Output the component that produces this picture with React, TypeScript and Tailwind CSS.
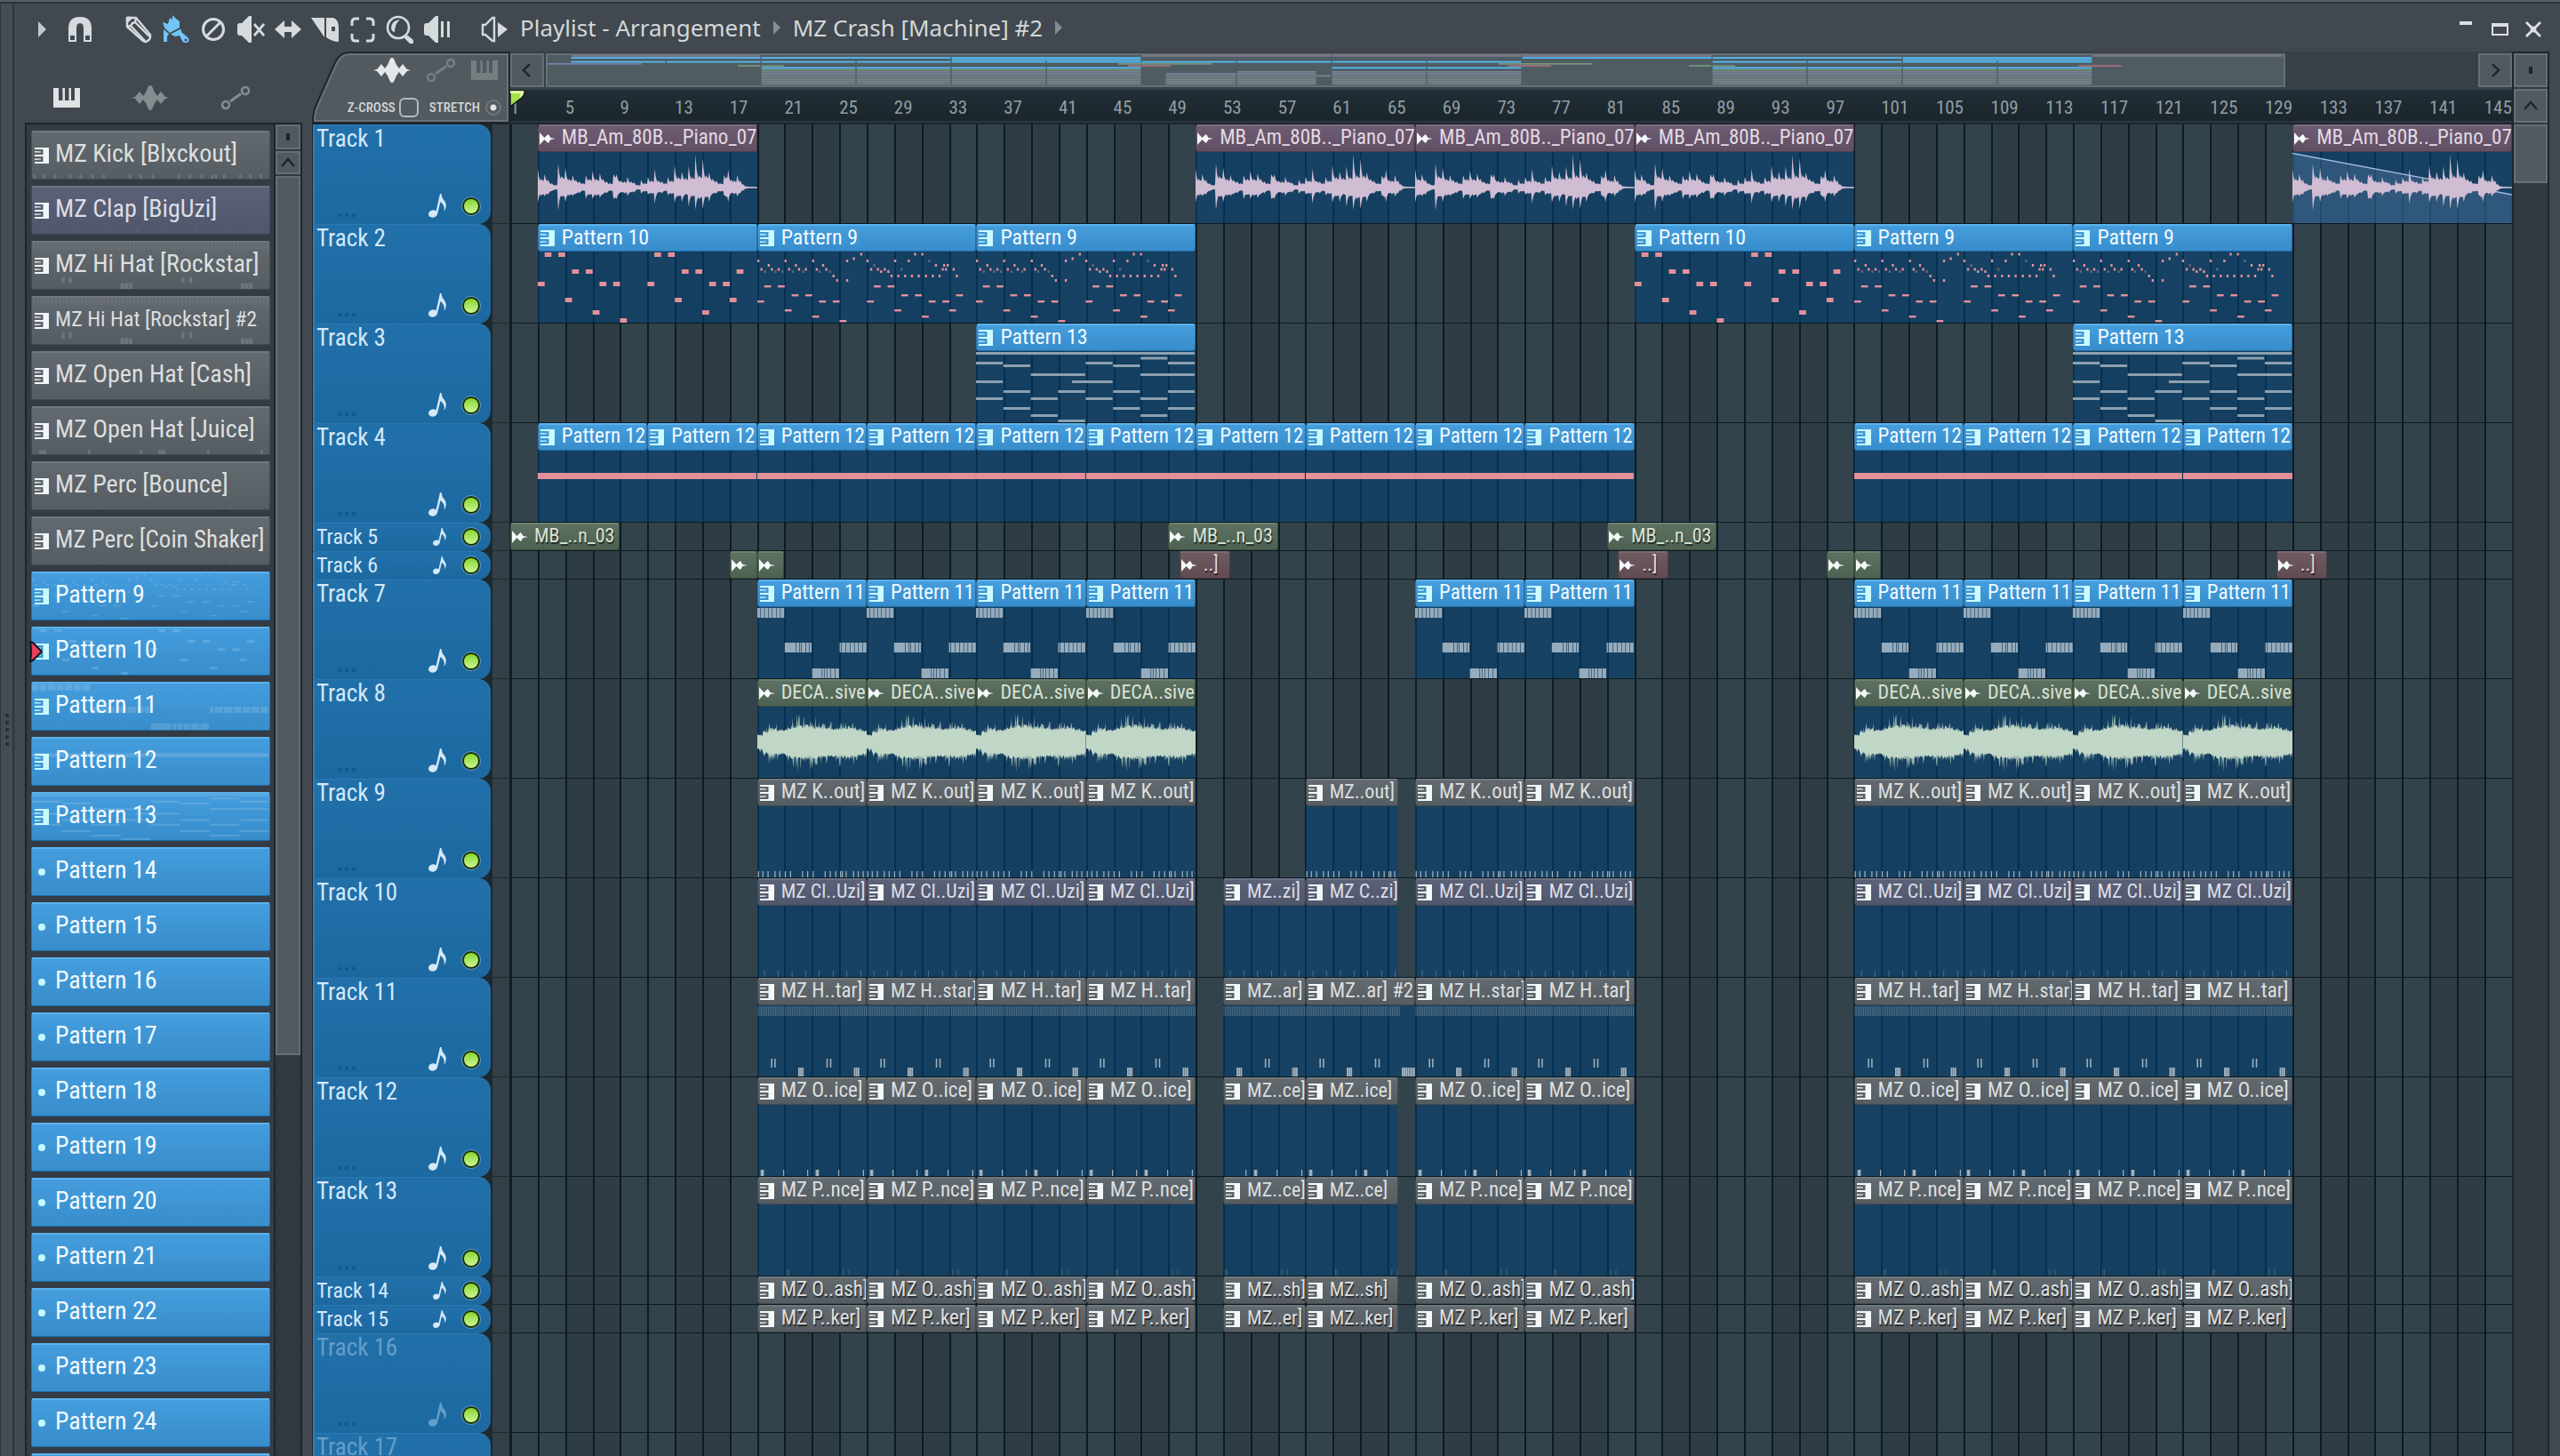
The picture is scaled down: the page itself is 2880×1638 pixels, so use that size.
import { ReactNode } from 'react';
import clsx from 'clsx';

const BARS = 146;

type Kind = 'p9' | 'p10' | 'p11' | 'p12' | 'p13' | 'kick' | 'clap' | 'hat' | 'hat2' | 'open' | 'perc' | 'piano' | 'deca' | 'none';
type Tone = 'blue' | 'gray' | 'slate' | 'plum' | 'green' | 'red';

interface ClipData {
    at: number;
    len: number;
    label: string;
    kind: Kind;
    tone: Tone;
    off?: number;
    fade?: boolean;
}

interface TrackData {
    name: string;
    small?: boolean;
    muted?: boolean;
    clips: ClipData[];
}

const TONES: Record<Tone, string> = {
    blue: 'from-[#459ddd] to-[#388dcb] border-t-[#5cb2ec] border-b-[#1f6ca8] text-[#f0faff]',
    gray: 'from-[#62696f] to-[#555c62] border-t-[#71787d] border-b-[#43494e] text-[#dcdfdf]',
    slate: 'from-[#5b6177] to-[#50566b] border-t-[#6b7186] border-b-[#3f4456] text-[#dcdde6]',
    plum: 'from-[#6d5b72] to-[#604f65] border-t-[#7d6b80] border-b-[#4f3d50] text-[#e3d9e2]',
    green: 'from-[#5c7161] to-[#4e6253] border-t-[#6c8170] border-b-[#3c4d40] text-[#dbe3d8]',
    red: 'from-[#705a62] to-[#624b53] border-t-[#806870] border-b-[#4d383f] text-[#e3d6da]',
};

const MAP_COLORS: Record<Tone, string> = {
    blue: '#56bffa',
    gray: '#7f8d94',
    slate: '#828aa8',
    plum: '#85789a',
    green: '#77967f',
    red: '#a5727c',
};

/* ---------- arrangement ---------- */

const many = (starts: number[], len: number, label: string, kind: Kind, tone: Tone): ClipData[] =>
    starts.map((at) => ({ at, len, label, kind, tone }));

const A = [19, 27, 35, 43];
const B = [67, 75];
const C = [99, 107, 115, 123];

const drum = (label: string, kind: Kind, tone: Tone, cut?: string, tail?: string, tailLen = 6.75): ClipData[] => [
    ...many(A, 8, label, kind, tone),
    ...(cut ? [{ at: 53, len: 6, label: cut, kind, tone, off: 2 }] : []),
    ...(tail ? [{ at: 59, len: tailLen, label: tail, kind, tone }] : []),
    ...many([...B, ...C], 8, label, kind, tone),
];

const tracks: TrackData[] = [
    {
        name: 'Track 1',
        clips: [
            ...many([3, 51, 67, 83], 16, 'MB_Am_80B.._Piano_07', 'piano', 'plum'),
            { at: 131, len: 16, label: 'MB_Am_80B.._Piano_07', kind: 'piano', tone: 'plum', fade: true },
        ],
    },
    {
        name: 'Track 2',
        clips: [
            ...many([3, 83], 16, 'Pattern 10', 'p10', 'blue'),
            ...many([19, 35, 99, 115], 16, 'Pattern 9', 'p9', 'blue'),
        ],
    },
    { name: 'Track 3', clips: many([35, 115], 16, 'Pattern 13', 'p13', 'blue') },
    { name: 'Track 4', clips: many([3, 11, 19, 27, 35, 43, 51, 59, 67, 75, ...C], 8, 'Pattern 12', 'p12', 'blue') },
    { name: 'Track 5', small: true, clips: many([1, 49, 81], 8, 'MB_..n_03', 'none', 'green') },
    {
        name: 'Track 6',
        small: true,
        clips: [...many([17, 19, 97, 99], 2, '', 'none', 'green'), ...many([49.8, 81.8, 129.8], 3.7, '..]', 'none', 'red')],
    },
    { name: 'Track 7', clips: many([...A, ...B, ...C], 8, 'Pattern 11', 'p11', 'blue') },
    { name: 'Track 8', clips: many([...A, ...C], 8, 'DECA..sive', 'deca', 'green') },
    { name: 'Track 9', clips: drum('MZ K..out]', 'kick', 'gray', undefined, 'MZ..out]') },
    { name: 'Track 10', clips: drum('MZ Cl..Uzi]', 'clap', 'slate', 'MZ..zi]', 'MZ C..zi]') },
    {
        name: 'Track 11',
        clips: drum('MZ H..tar]', 'hat', 'gray', 'MZ..ar]', 'MZ..ar] #2', 8).map((c) => ({
            ...c,
            kind: c.at === 59 ? 'hat2' : c.kind,
            label: [27, 67, 107].includes(c.at) ? 'MZ H..star]' : c.label,
        })),
    },
    { name: 'Track 12', clips: drum('MZ O..ice]', 'open', 'gray', 'MZ..ce]', 'MZ..ice]') },
    { name: 'Track 13', clips: drum('MZ P..nce]', 'perc', 'gray', 'MZ..ce]', 'MZ..ce]') },
    { name: 'Track 14', small: true, clips: drum('MZ O..ash]', 'none', 'gray', 'MZ..sh]', 'MZ..sh]') },
    { name: 'Track 15', small: true, clips: drum('MZ P..ker]', 'none', 'gray', 'MZ..er]', 'MZ..ker]') },
    { name: 'Track 16', muted: true, clips: [] },
    { name: 'Track 17', muted: true, clips: [] },
];

const picker: { name: string; kind: Kind; tone: Tone; bars: number }[] = [
    { name: 'MZ Kick [Blxckout]', kind: 'kick', tone: 'gray', bars: 8 },
    { name: 'MZ Clap [BigUzi]', kind: 'clap', tone: 'slate', bars: 8 },
    { name: 'MZ Hi Hat [Rockstar]', kind: 'hat', tone: 'gray', bars: 8 },
    { name: 'MZ Hi Hat [Rockstar] #2', kind: 'hat', tone: 'gray', bars: 8 },
    { name: 'MZ Open Hat [Cash]', kind: 'none', tone: 'gray', bars: 8 },
    { name: 'MZ Open Hat [Juice]', kind: 'open', tone: 'gray', bars: 8 },
    { name: 'MZ Perc [Bounce]', kind: 'perc', tone: 'gray', bars: 8 },
    { name: 'MZ Perc [Coin Shaker]', kind: 'perc', tone: 'gray', bars: 8 },
    { name: 'Pattern 9', kind: 'p9', tone: 'blue', bars: 16 },
    { name: 'Pattern 10', kind: 'p10', tone: 'blue', bars: 16 },
    { name: 'Pattern 11', kind: 'p11', tone: 'blue', bars: 8 },
    { name: 'Pattern 12', kind: 'p12', tone: 'blue', bars: 8 },
    { name: 'Pattern 13', kind: 'p13', tone: 'blue', bars: 16 },
    ...Array.from({ length: 12 }, (_, i) => ({ name: `Pattern ${14 + i}`, kind: 'none' as Kind, tone: 'blue' as Tone, bars: 8 })),
];

/* ---------- clip contents, ten units per bar and 80 units high ---------- */

type R = [x: number, y: number, w: number, h: number, o?: number];

const MELODY = [
    [0.5, 1.5, 8.5, 9.5],
    [2.5, 3.5, 10.5, 11.5, 14.5],
    [0, 4.5, 5.5, 8, 12.5, 13.5],
    [2, 10, 14],
    [4, 12],
    [6],
];

const melody = (ys: number[], h: number): R[] =>
    MELODY.flatMap((row, i) => row.map((x): R => [x * 10, ys[i], 5, h]));

// [y, dimmed, offsets from the start of the clip]
const ARP: [number, boolean, number[]][] = [
    [1.5, false, [229, 348, 364]],
    [6.5, false, [213]],
    [9, false, [2, 62, 123, 198, 243, 304, 334]],
    [9, true, [379]],
    [14, false, [25, 85, 145, 394, 412, 420]],
    [14, true, [258]],
    [18.5, false, [9, 32, 47, 70, 92, 107, 131, 152, 251, 266, 281, 409, 416, 433]],
    [18.5, true, [318]],
    [21, true, [17, 40, 55, 78, 101, 137, 160]],
    [21, false, [273, 289]],
    [26, false, [168, 296, 311, 326, 341, 356, 372, 387, 402, 440]],
    [31, false, [176, 198]],
];

const CHORDS: [number, number, number][] = [
    [0, 1, 8], [6, 6.5, 1], [0, 12, 1], [4, 12, 1], [7, 12, 1], [1, 15, 1], [5, 15, 1], [2, 25, 2], [6, 25, 2],
    [0, 33, 1], [3.5, 33, 1.5], [1, 44, 1], [3, 44, 1], [5, 44, 1], [7, 44, 1], [0, 52, 1], [2, 52, 1], [4, 52, 1],
    [6, 52, 1], [1, 63, 1], [5, 63, 1], [7, 63, 1], [2, 71, 1], [6, 71, 1], [3, 77, 1],
];

const block = (x: number, y: number, cuts: number[]): R[] => {
    const edges = [0, ...cuts, 20];
    return edges.slice(0, -1).map((e, i): R => [x + e, y, edges[i + 1] - e - 0.4, 11, 0.95]);
};

const at = (xs: number[], y: number, w: number, h: number, o = 1): R[] => xs.map((x): R => [x, y, w, h, o]);

const hatTop = (n: number): R[] => at(Array.from({ length: n }, (_, i) => i * 1.25 + 0.3), 1, 0.7, 11, 0.4);

const NOTES: Partial<Record<Kind, R[]>> = {
    p10: melody([1, 20, 34, 52, 66, 75], 5),
    p9: [
        ...melody([38, 48, 55, 65, 72, 77], 2.4),
        ...ARP.flatMap(([y, dim, xs]) => xs.map((x): R => [x / 3.025 - 0.7, y, 1.5, 3, dim ? 0.4 : 1])),
    ],
    p11: [
        ...block(0, 1, [2.5, 5.4, 8.3, 11, 14, 17]),
        ...block(20, 40, [8.4, 11, 12.4, 15.6, 18]),
        ...block(40, 69, [7.4, 9, 11, 13.6, 16.8]),
        ...block(60, 40, [1.5, 4.8, 8, 11, 14, 17]),
    ],
    p12: [[0, 25, 79.7, 7]],
    p13: CHORDS.map(([c, y, n]): R => [c * 20, y, n * 20 - 0.4, 3]),
    kick: at([0.4, 3.7, 7.4, 12.5, 16, 20, 23.8, 32.6, 36.3, 40.3, 49.1, 52.8, 56.8, 60.3, 61.6, 64.4, 69.8, 73.2, 76.8], 73, 0.8, 7),
    clap: at([5, 14.8, 25, 35, 44.8, 55, 65, 75.2], 73, 0.6, 7, 0.45),
    hat: [
        ...hatTop(64),
        ...at([10, 12.4, 50.4, 53], 60, 1, 10),
        ...at([29.8, 31.2, 32.6, 70.4, 71.8, 73.2], 70, 1.2, 10),
    ],
    hat2: [
        ...hatTop(55),
        ...at([10, 12.4, 50.4, 53], 60, 1, 10),
        ...at([29.8, 31.2, 32.6, 70, 71.4, 72.8, 74.2, 75.6, 77, 78.4], 70, 1.2, 10),
    ],
    open: [...at([2.4, 42.5], 73, 2.4, 7), ...at([18.8, 36.3, 59, 77], 73, 0.8, 7)],
    perc: at([21.5, 22.8, 62.5, 66.5], 73, 0.5, 7, 0.4),
};

const NOTE_COLORS: Partial<Record<Kind, string>> = {
    p9: 'text-[#e3909a]',
    p10: 'text-[#e3909a]',
    p12: 'text-[#e3909a]',
    p11: 'text-[#9db1c0]',
    p13: 'text-[#8ba0b0]',
};

function Notes({ kind, off = 0, len, className }: { kind: Kind; off?: number; len: number; className?: string }) {
    return (
        <svg viewBox={`${off * 10} 0 ${len * 10} 80`} preserveAspectRatio="none" className={clsx('size-full', className)}>
            {(NOTES[kind] ?? []).map(([x, y, w, h, o], i) => (
                <rect key={i} x={x} y={y} width={w} height={h} opacity={o ?? 1} fill="currentColor" />
            ))}
        </svg>
    );
}

// [offset, amplitude] of every peak in the piano loop, 484 units long
const PIANO: [number, number][] = [
    [0, 21], [7, 10], [15, 15], [23, 9], [31, 5], [41, 3], [45, 27], [52, 13], [61, 22], [69, 10], [77, 14], [84, 9],
    [92, 7], [99, 5], [106, 14], [114, 10], [121, 19], [129, 10], [137, 16], [144, 10], [152, 7], [159, 5], [167, 15],
    [174, 15], [183, 8], [191, 7], [198, 12], [206, 7], [213, 6], [221, 3], [228, 9], [236, 5], [243, 12], [251, 8],
    [258, 21], [266, 8], [274, 7], [281, 5], [287, 12], [295, 8], [302, 25], [310, 12], [318, 18], [326, 11], [333, 24],
    [341, 12], [348, 37], [356, 14], [364, 33], [371, 14], [378, 17], [386, 10], [394, 8], [402, 5], [411, 14], [416, 12],
    [420, 20], [427, 9], [433, 8], [440, 14], [447, 8], [453, 4], [461, 1.5], [484, 1],
];

const pianoSide = (sign: number) =>
    PIANO.flatMap(([x, a], i) => {
        const next = PIANO[i + 1];
        const amp = sign < 0 ? a : a * (0.8 + 0.15 * Math.sin(i * 2.3));
        if (!next) return [[x, 40 + sign * amp]];
        const dip = Math.min(a, next[1]) * 0.75;
        return [
            [x, 40 + sign * amp],
            [x + 2.5, 40 + sign * (dip + (amp - dip) * 0.35)],
            [next[0] - 2, 40 + sign * dip],
        ];
    });

const PIANO_PATH = `M${pianoSide(-1).map((p) => p.join(' ')).join('L')}L${pianoSide(1).reverse().map((p) => p.join(' ')).join('L')}Z`;

const PEAKS = [12, 18, 30, 22, 19, 22, 29, 34, 32, 36, 30, 28, 27, 24, 24, 27, 29, 28, 23, 20, 22];
const BODY = [9, 14, 16, 16, 15, 17, 19, 20, 20, 20, 19, 19, 18, 17, 18, 18, 19, 18, 16, 15, 13];
const noise = (i: number) => {
    const v = Math.sin(i * 12.9898) * 43758.5453;
    return v - Math.floor(v);
};

const decaPath = (env: number[], lo: number, pow: number, seed: number) => {
    const n = 172;
    const side = (sign: number) =>
        Array.from({ length: n + 1 }, (_, i) => {
            const e = env[Math.min(20, Math.floor((i / n) * 20))];
            const a = e * (lo + (1 - lo) * noise(i + seed + sign * 500) ** pow);
            return `${(i / n) * 80} ${40 + sign * a}`;
        });
    return `M${side(-1).join('L')}L${side(1).reverse().join('L')}Z`;
};

const DECA_SPIKES = decaPath(PEAKS, 0.5, 3, 3);
const DECA_BODY = decaPath(BODY, 0.75, 1, 40);

function ClipBody({ clip }: { clip: ClipData }) {
    if (clip.kind === 'piano') {
        return (
            <svg viewBox="0 0 484 80" preserveAspectRatio="none" className="size-full">
                {clip.fade && (
                    <>
                        <path d="M0 1.5L484 48V80H0Z" fill="#7a9bc8" opacity=".25" />
                        <path d="M0 1.5L484 48" stroke="#a3bbe6" strokeWidth="1.4" />
                    </>
                )}
                <path d={PIANO_PATH} fill="#d0bdd3" />
            </svg>
        );
    }
    if (clip.kind === 'deca') {
        return (
            <svg viewBox="0 0 80 80" preserveAspectRatio="none" className="size-full">
                <path d={DECA_SPIKES} fill="#c0d6c6" opacity=".75" />
                <path d={DECA_BODY} fill="#c0d6c6" />
            </svg>
        );
    }
    return <Notes kind={clip.kind} off={clip.off} len={clip.len} className={NOTE_COLORS[clip.kind] ?? 'text-[#a3b0ba]'} />;
}

/* ---------- icons ---------- */

function PatternIcon() {
    return (
        <svg viewBox="0 0 16 18" className="h-[18px] w-4 shrink-0" fill="currentColor">
            <path d="M0 0H16V18H0V16H9.500V10H0V8H9.500V2H0Z" />
            <path d="M0 4L7 4.600V5.600H0ZM0 12.400H7V13.400L0 14Z" />
        </svg>
    );
}

function AudioIcon() {
    return (
        <svg viewBox="0 0 18 16" className="h-4 w-[18px] shrink-0">
            <path d="M0 1L5.500 7L8.500 4L10 3L12.500 7L18 8L12.500 9L10 13L8.500 12L5.500 9L0 15Z" fill="currentColor" />
        </svg>
    );
}

function WaveIcon({ className }: { className?: string }) {
    return (
        <svg viewBox="0 0 42 28" className={clsx('h-7 w-[42px]', className)} fill="currentColor">
            <path d="M0 14L4 13L9 7L13 12L16 8L19 1Q21 -1 23 1L26 8L29 12L33 7L38 13L42 14L38 15L33 21L29 16L26 20L23 27Q21 29 19 27L16 20L13 16L9 21L4 15Z" />
        </svg>
    );
}

function LineIcon({ className }: { className?: string }) {
    return (
        <svg viewBox="0 0 34 28" className={clsx('h-7 w-[34px]', className)} fill="none" stroke="currentColor" strokeWidth="2.600">
            <circle cx="6" cy="22" r="4" />
            <circle cx="28" cy="6" r="4" />
            <path d="M11 18L23 9.500" strokeWidth="3" />
        </svg>
    );
}

function KeysIcon({ className }: { className?: string }) {
    return (
        <svg viewBox="0 0 30 22" className={clsx('h-[22px] w-[30px]', className)}>
            <path d="M0 0H6V14H10.500V0H13V14H17.500V0L20 0V14H24V0H30V22H0Z" fill="currentColor" />
            <path d="M10.500 0H12L11.500 9ZM18 0H20L18.500 9Z" fill="currentColor" />
        </svg>
    );
}

function NoteIcon({ small }: { small?: boolean }) {
    return (
        <svg viewBox="0 0 20 27" className={small ? 'h-5 w-[15px]' : 'h-[27px] w-5'} fill="currentColor">
            <ellipse cx="5" cy="22.500" rx="5" ry="4.200" transform="rotate(-15 5 22.500)" />
            <path d="M8 22L13 0L14.500 0Q15 5 18 8Q22 13 17.500 20Q19 13 13.500 9L10 23Z" />
        </svg>
    );
}

function Chevron({ d }: { d: string }) {
    return (
        <svg viewBox="0 0 20 20" className="size-5" fill="none" stroke="#1c252c" strokeWidth="2.400">
            <path d={d} />
        </svg>
    );
}

const tools: { label: string; className?: string; art: ReactNode }[] = [
    { label: 'Menu', className: 'text-[#c3c9cc]', art: <path d="M11 7L20 16L11 25Z" fill="currentColor" /> },
    {
        label: 'Snap',
        className: 'mr-6',
        art: (
            <path
                d="M3 30V15Q3 2 16 2Q29 2 29 15V30H20V15Q20 9 16 9Q12 9 12 15V30ZM5 23V28H10V23ZM22 23V28H27V23Z"
                fill="currentColor"
                fillRule="evenodd"
            />
        ),
    },
    {
        label: 'Draw',
        art: (
            <g fill="none" stroke="currentColor" strokeWidth="2.400" strokeLinejoin="round">
                <path d="M3 13V3H13L29 22Q30 28 24 30Q22 30 21 29Z" />
                <path d="M3 13L7 12L9 9L12 8L13 3M7 12L23 29M12 8L28 24" />
                <path d="M3 3H8L3 8Z" fill="currentColor" />
            </g>
        ),
    },
    {
        label: 'Paint',
        className: 'text-[#72c5f8]',
        art: (
            <g fill="currentColor">
                <path d="M9 3L12 5V0L16 4L20 7L20 14L9 20L3 14L1 8L7 10Z" />
                <path d="M10 21.500L21 15.500L23 20L28 24Q32 27 30 30Q26 33 23 29L20 23L15 24Z" />
                <path d="M2 16L8 21L6 24V30H2Z" />
                <circle cx="27" cy="28" r="1.500" fill="#41474e" />
            </g>
        ),
    },
    {
        label: 'Delete',
        art: (
            <g fill="none" stroke="currentColor" strokeWidth="3">
                <circle cx="16" cy="16" r="11.500" />
                <path d="M24 8L8 24" />
            </g>
        ),
    },
    {
        label: 'Mute',
        art: (
            <>
                <path d="M1 12Q1 9 4 9H6L14 1H17V31H14L6 23H4Q1 23 1 20Z" fill="currentColor" />
                <path d="M20 10L31 23M31 10L20 23" stroke="currentColor" strokeWidth="2.800" />
            </>
        ),
    },
    { label: 'Slip', art: <path d="M1 16L12 6V13H20V6L31 16L20 26V19H12V26Z" fill="currentColor" /> },
    {
        label: 'Slice',
        art: (
            <g fill="currentColor">
                <path d="M0 3H15V25Z" />
                <path d="M17 3H25Q31 5 31 14V30Q24 30 17 25ZM23 13V18H27V13Z" fillRule="evenodd" />
            </g>
        ),
    },
    {
        label: 'Select',
        art: (
            <path
                d="M12 4H8Q4 4 4 8V12M20 4H24Q28 4 28 8V12M12 29H8Q4 29 4 25V21M20 29H24Q28 29 28 25V21"
                fill="none"
                stroke="currentColor"
                strokeWidth="3"
            />
        ),
    },
    {
        label: 'Zoom',
        art: (
            <>
                <circle cx="14" cy="14" r="12" fill="none" stroke="currentColor" strokeWidth="2.600" />
                <path d="M6 15Q6 6 16 5Q10 10 10 19Q7 19 6 15Z" fill="currentColor" />
                <path d="M21 26Q21 23 25 23L31 28V32H27Z" fill="currentColor" />
            </>
        ),
    },
    {
        label: 'Playback',
        className: 'mr-[22px]',
        art: (
            <g fill="currentColor">
                <path d="M1 12Q1 9 4 9H6L14 1H17V31H14L6 23H4Q1 23 1 20Z" />
                <path d="M20 7H23V25H20ZM27 7H30V25H27Z" />
            </g>
        ),
    },
    {
        label: 'Play arrangement',
        art: (
            <>
                <path d="M3 11H6L14 3H16V29H14L6 22H3Z" fill="none" stroke="currentColor" strokeWidth="2.400" />
                <path d="M20 8L31 16L20 25Z" fill="currentColor" />
            </>
        ),
    },
];

/* ---------- panels ---------- */

function Toolbar() {
    return (
        <header className="flex h-[54px] shrink-0 items-center pr-[11px] pl-[11px] text-[#d5dadd]">
            {tools.map((t) => (
                <button key={t.label} aria-label={t.label} className={clsx('flex w-[42px] shrink-0 justify-center pt-1', t.className)}>
                    <svg viewBox="0 0 32 32" className="size-8">{t.art}</svg>
                </button>
            ))}
            <nav className="ml-2 flex items-center gap-3.5 font-['Noto_Sans',sans-serif] text-[26px] leading-8 whitespace-nowrap text-[#d3d8da]">
                <span>Playlist - Arrangement</span>
                <Crumb />
                <span>MZ Crash [Machine] #2</span>
                <Crumb />
            </nav>
            <div className="ml-auto flex items-center pt-1">
                <button aria-label="Minimize" className="flex h-5 w-[38px] items-start justify-center pt-px">
                    <span className="h-1 w-3.5 bg-[#dce0e2]" />
                </button>
                <button aria-label="Maximize" className="flex w-[38px] justify-center">
                    <span className="h-3.5 w-[19px] border-2 border-t-4 border-[#dce0e2]" />
                </button>
                <button aria-label="Close" className="flex w-[38px] justify-center">
                    <svg viewBox="0 0 18 18" className="size-[18px]" stroke="#dce0e2" strokeWidth="2.800">
                        <path d="M1 1L17 17M17 1L1 17" />
                        <circle cx="9" cy="9" r="2" fill="#dce0e2" />
                    </svg>
                </button>
            </div>
        </header>
    );
}

function Crumb() {
    return (
        <svg viewBox="0 0 8 16" className="h-4 w-2">
            <path d="M0 0L8 8L0 16Z" fill="#868c90" />
        </svg>
    );
}

function pickerTextSize(name: string) {
    if (name.length > 21) return 'text-2xl';
    return name.length > 20 ? 'text-[27px]' : 'text-[28px]';
}

function Picker() {
    return (
        <aside className="flex w-[312px] shrink-0 flex-col">
            <div className="flex h-20 shrink-0 items-center pt-6 text-[#868d90]">
                <button aria-label="Patterns" className="flex w-[94px] justify-center text-[#dfe3e5]"><KeysIcon /></button>
                <button aria-label="Audio" className="flex w-[94px] justify-center"><WaveIcon /></button>
                <button aria-label="Automation" className="flex w-[98px] justify-center"><LineIcon /></button>
            </div>
            <div className="flex min-h-0 flex-1 border-2 border-b-0 border-[#1d262d] bg-[#333c44]">
                <ul className="flex min-w-0 flex-1 flex-col gap-[7px] overflow-hidden pt-[7px] pr-1 pl-[5px]">
                    {picker.map((p) => (
                        <li key={p.name} className="relative shrink-0">
                            <button
                                className={clsx(
                                    'relative flex h-[55px] w-full items-center gap-[7px] overflow-hidden rounded-[2px] border border-t-2 border-x-black/20 bg-linear-to-b pb-1 pl-[3px] text-left leading-8 whitespace-nowrap',
                                    pickerTextSize(p.name),
                                    TONES[p.tone],
                                )}
                            >
                                <span className="absolute inset-0 text-white/15">
                                    <Notes kind={p.kind} len={p.bars} />
                                </span>
                                <span className="flex w-4 shrink-0 justify-center pt-1">
                                    {p.kind === 'none' && p.tone === 'blue' ? (
                                        <span className="size-2 rounded-full bg-[#c4fbff]" />
                                    ) : (
                                        <span className={p.tone === 'blue' ? 'text-[#c8fbff]' : 'text-[#f0f6fa]'}><PatternIcon /></span>
                                    )}
                                </span>
                                <span className="relative">{p.name}</span>
                            </button>
                            {p.name === 'Pattern 10' && (
                                <svg viewBox="0 0 16 24" className="absolute top-4 -left-0.5 h-6 w-4">
                                    <path d="M1 1Q3 1 5 3L14 12L5 21Q3 23 1 23Q3 12 1 1Z" fill="#ea3f5e" stroke="#10181e" strokeWidth="2" />
                                </svg>
                            )}
                        </li>
                    ))}
                </ul>
                <div className="flex w-[30px] shrink-0 flex-col border-l-2 border-[#1d262d] bg-[#343b43] bg-[repeating-linear-gradient(45deg,transparent_0_2px,rgba(0,0,0,.08)_2px_4px)]">
                    <ScrollButton className="h-7"><span className="h-2 w-1 bg-[#1c252c]" /></ScrollButton>
                    <ScrollButton className="mt-0.5 h-[26px]"><Chevron d="M3 14L10 6L17 14" /></ScrollButton>
                    <div className="mt-0.5 h-[66%] border-2 border-[#666d73] bg-[#52595f]" />
                </div>
            </div>
        </aside>
    );
}

function ScrollButton({ className, children, label }: { className?: string; children?: ReactNode; label?: string }) {
    return (
        <button aria-label={label ?? 'Scroll'} className={clsx('flex shrink-0 items-center justify-center border-2 border-[#666d73] bg-[#52595f]', className)}>
            {children}
        </button>
    );
}

function PlaylistCorner() {
    return (
        <div className="relative w-[223px] shrink-0">
            <svg viewBox="0 0 222 80" preserveAspectRatio="none" className="absolute inset-0 size-full">
                <path d="M1 80V74Q2 66 6 57L26 12Q31 1 42 1H221V80Z" fill="#52595f" stroke="#1d262d" strokeWidth="2" />
                <path d="M3 78V74Q4 66 8 58L28 13Q33 3 43 3H219V78Z" fill="none" stroke="#6b7277" strokeWidth="2" />
            </svg>
            <div className="relative flex h-full flex-col">
                <div className="flex h-[42px] items-center justify-end gap-[17px] pr-3.5 text-[#767e82]">
                    <button aria-label="Audio clips" className="text-[#e4e7e8]"><WaveIcon /></button>
                    <button aria-label="Automation clips"><LineIcon /></button>
                    <button aria-label="Pattern clips"><KeysIcon /></button>
                </div>
                <div className="flex flex-1 items-center justify-end pt-1 pr-2.5 text-[15px] leading-4 font-medium text-[#d3d7d9]">
                    <label className="mr-3 flex items-center gap-1">
                        Z-CROSS
                        <input type="checkbox" className="size-[22px] appearance-none rounded-[6px] border-2 border-[#b4babd] bg-transparent" />
                    </label>
                    <label className="flex items-center gap-1.5">
                        STRETCH
                        <input
                            type="radio"
                            name="mode"
                            defaultChecked
                            className="size-[18px] appearance-none rounded-full border-2 border-[#6f767b] bg-[radial-gradient(circle,#dfe2e3_0_3px,transparent_4px)]"
                        />
                    </label>
                </div>
            </div>
        </div>
    );
}

function Overview() {
    return (
        <div className="flex h-10 shrink-0 items-stretch bg-[#383f46] pt-0.5">
            <ScrollButton label="Scroll left" className="w-[38px]"><Chevron d="M13 3L6 10L13 17" /></ScrollButton>
            <div className="ml-0.5 flex min-w-0 flex-1">
                <div className="w-[90%] border-2 border-[#666f72] bg-[#4f5d63]">
                    <svg viewBox={`0 0 ${BARS} 34`} preserveAspectRatio="none" className="size-full">
                        {tracks.map((t, i) =>
                            t.clips.map((c) => (
                                <rect
                                    key={`${i}-${c.at}`}
                                    x={c.at - 1}
                                    y={i * 2.25}
                                    width={c.len - 0.1}
                                    height={1.7}
                                    fill={i === 4 && c.at === 1 ? '#7482a8' : MAP_COLORS[c.tone]}
                                    opacity={i > 7 ? 0.85 : 1}
                                />
                            )),
                        )}
                    </svg>
                </div>
            </div>
            <ScrollButton label="Scroll right" className="w-[38px]"><Chevron d="M7 3L14 10L7 17" /></ScrollButton>
        </div>
    );
}

function Ruler() {
    const labels = Array.from({ length: 37 }, (_, i) => i * 4 + 1);
    return (
        <div className="relative flex h-10 shrink-0 items-center overflow-hidden border-t-[3px] border-b-2 border-t-[#36434b] border-b-[#2b373e] bg-linear-to-b from-[#222e36] to-[#1a252c] pt-1 text-[21px] leading-6 text-[#939da3]">
            {labels.map((n) => (
                <span key={n} className="shrink-0" style={{ width: `${400 / BARS}%` }}>{n}</span>
            ))}
            <svg viewBox="0 0 18 20" className="absolute top-0 left-0 h-5 w-[18px]">
                <path d="M0 1H16Q17 5 13 9L0 19Z" fill="#a4e04c" stroke="#0f1a12" strokeWidth="1.500" />
                <path d="M0 2.500H14Q14 5 11 8" fill="none" stroke="#f0ffb0" strokeWidth="2.400" />
            </svg>
        </div>
    );
}

function clipTextSize({ len, label, tone }: ClipData) {
    if (len === 16) return tone === 'blue' ? 'text-2xl' : 'text-[23px]';
    return len === 8 && label.length <= 10 && tone !== 'green' ? 'text-[23px]' : 'text-[22px]';
}

function Clip({ clip, small }: { clip: ClipData; small?: boolean }) {
    const audio = clip.tone === 'plum' || clip.tone === 'green' || clip.tone === 'red';
    return (
        <div
            className="absolute inset-y-0 flex flex-col overflow-hidden"
            style={{ left: `${((clip.at - 1) / BARS) * 100}%`, width: `${(clip.len / BARS) * 100}%` }}
        >
            <div
                className={clsx(
                    'flex h-[31px] shrink-0 items-center gap-2 overflow-hidden rounded-[3px] border border-t-2 border-x-black/25 bg-linear-to-b pb-0.5 pl-0.5 leading-6 whitespace-nowrap',
                    clipTextSize(clip),
                    small && 'text-shadow-[1px_2px_1px_rgba(0,0,0,.6)]',
                    TONES[clip.tone],
                )}
            >
                <span className={clsx('flex w-4 shrink-0 justify-center pt-0.5', clip.tone === 'blue' ? 'text-[#ccfcff]' : 'text-[#f3f8f8]')}>
                    {audio ? <AudioIcon /> : <PatternIcon />}
                </span>
                {clip.label && <span>{clip.label}</span>}
            </div>
            {!small && (
                <div className="min-h-0 flex-1 bg-[#004176]/55">
                    <ClipBody clip={clip} />
                </div>
            )}
        </div>
    );
}

function TrackHeader({ track }: { track: TrackData }) {
    return (
        <div className="w-[202px] shrink-0 border-r-2 border-[#1d282f] bg-[#1d282f]">
            <div
                className={clsx(
                    'flex h-full w-[200px] justify-between rounded-r-[14px] border-t border-l-2 border-t-[#2c79b2] border-l-[#2f7fba] bg-linear-to-b from-[#2270aa] to-[#1c69a1] pl-0.5',
                    track.small ? 'items-center pb-0.5 text-2xl' : 'text-[27px]',
                    track.muted ? 'text-[#659ec9]' : 'text-[#d4e8f8]',
                )}
            >
                <div className="flex flex-col justify-between">
                    <span className="leading-[30px]">{track.name}</span>
                    {!track.small && (
                        <span className="mb-2 ml-6 flex gap-1">
                            <i className="size-1 bg-[#135890]" />
                            <i className="size-1 bg-[#135890]" />
                            <i className="size-1 bg-[#135890]" />
                        </span>
                    )}
                </div>
                <div className={clsx('flex items-center gap-[17px] pr-[11px]', !track.small && 'self-end pb-[7px]')}>
                    <NoteIcon small={track.small} />
                    <button
                        aria-label={`Mute ${track.name}`}
                        className="size-[22px] rounded-full border border-[#6aa0c4] bg-[#17320f] p-0.5"
                    >
                        <span className="block size-full rounded-full bg-linear-to-b from-[#86d624] to-[#cdf590]" />
                    </button>
                </div>
            </div>
        </div>
    );
}

function Grid() {
    return (
        <div className="absolute inset-0 flex">
            {Array.from({ length: BARS / 2 }, (_, i) => (
                <div key={i} className={clsx('flex-1 border-l-2 border-[#0d1b23]', i % 4 < 2 ? 'bg-[#33434c]' : 'bg-[#2d3c45]')} />
            ))}
        </div>
    );
}

function Playlist() {
    return (
        <main className="flex min-w-0 flex-1 flex-col">
            <div className="flex h-20 shrink-0">
                <PlaylistCorner />
                <div className="flex min-w-0 flex-1 flex-col">
                    <Overview />
                    <Ruler />
                </div>
            </div>
            <div className="relative flex min-h-0 flex-1 flex-col overflow-hidden border-t-2 border-l border-[#1d262d] bg-[#353f47]">
                <div className="absolute inset-y-0 right-0 left-[221px] border-l border-[#16222a]">
                    <Grid />
                </div>
                {tracks.map((t) => (
                    <div key={t.name} className={clsx('relative flex shrink-0', t.small ? 'h-8' : 'h-28')}>
                        <TrackHeader track={t} />
                        <div className="w-5 shrink-0 border-b border-[#1f2a31]" />
                        <div className="relative flex-1 border-b border-[#0c1a22]">
                            {t.clips.map((c) => <Clip key={c.at} clip={c} small={t.small} />)}
                        </div>
                    </div>
                ))}
            </div>
        </main>
    );
}

export default function App() {
    return (
        <div className="flex h-screen flex-col overflow-hidden bg-[#41484f] font-['Roboto_Condensed','Noto_Sans',sans-serif]">
            <div className="h-1 shrink-0 border-b-2 border-[#2c343b] bg-[#555c62]" />
            <div className="flex min-h-0 flex-1">
                <div className="flex w-4 shrink-0 flex-col items-center justify-center gap-1 border-x border-[#2d353c] border-r-2 bg-[#454c53]">
                    {[0, 1, 2, 3, 4].map((i) => <i key={i} className="size-1 bg-[#2a3138]" />)}
                </div>
                <div className="flex min-w-0 flex-1 flex-col">
                    <Toolbar />
                    <div className="flex min-h-0 flex-1 gap-[11px] pr-3 pl-3">
                        <Picker />
                        <div className="flex min-w-0 flex-1">
                            <Playlist />
                            <div className="flex w-[42px] shrink-0 flex-col border-x-2 border-t-2 border-[#1d262d] bg-[#343b43] bg-[repeating-linear-gradient(45deg,transparent_0_2px,rgba(0,0,0,.08)_2px_4px)]">
                                <ScrollButton className="h-[38px]"><span className="h-2 w-1 bg-[#1c252c]" /></ScrollButton>
                                <ScrollButton label="Scroll up" className="mt-0.5 h-[38px]"><Chevron d="M3 14L10 6L17 14" /></ScrollButton>
                                <div className="mt-0.5 h-[66px] border-2 border-[#666d73] bg-[#52595f]" />
                            </div>
                        </div>
                    </div>
                </div>
            </div>
        </div>
    );
}
